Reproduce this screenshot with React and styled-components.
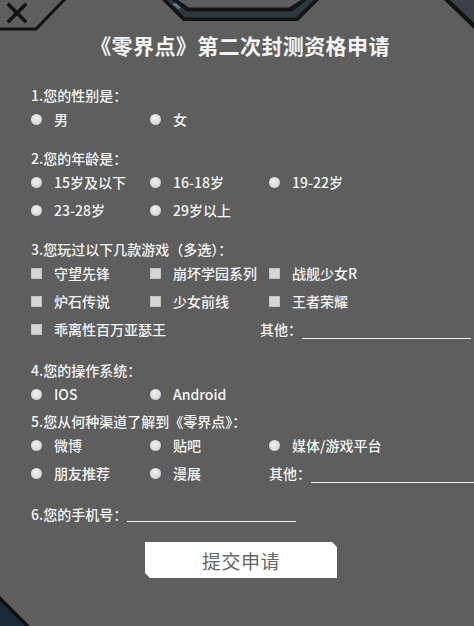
import React from "react";
import styled, { createGlobalStyle } from "styled-components";

const GlobalStyle = createGlobalStyle`
  html, body { margin: 0; padding: 0; background: #5e5e5e; }
  body { font-family: "Noto Sans CJK SC", "Noto Sans", sans-serif; }
  * { box-sizing: border-box; }
`;

const Page = styled.div`
  position: relative;
  width: 474px;
  height: 626px;
  overflow: hidden;
  background: #5e5e5e;
  color: #f4f4f4;
  padding-top: 30px;
`;

const Frame = styled.svg`
  position: absolute;
  left: 0;
  top: 0;
  pointer-events: none;
`;

const Title = styled.h1`
  margin: 0;
  font-size: 21px;
  line-height: 30px;
  font-weight: 700;
  text-align: center;
  letter-spacing: 0.4px;
  padding-left: 6px;
`;

const Form = styled.form`
  margin-top: 25px;
  padding-left: 31px;
  display: flex;
  flex-direction: column;
`;

const Group = styled.div`
  display: flex;
  flex-direction: column;
  margin-bottom: ${(p) => p.$gap}px;
`;

const Label = styled.div`
  font-size: 14px;
  line-height: 20px;
  font-weight: 500;
  white-space: nowrap;
  flex: 0 0 auto;
  width: ${(p) => (p.$width ? `${p.$width}px` : "auto")};
`;

const Row = styled.div`
  display: flex;
  align-items: center;
  height: ${(p) => p.$h || 28}px;
`;

const Option = styled.label`
  display: flex;
  align-items: center;
  gap: 12px;
  width: ${(p) => p.$width || 119}px;
  flex: 0 0 auto;
  font-size: 14px;
  font-weight: 500;
  white-space: nowrap;
`;

const Radio = styled.span`
  width: 11px;
  height: 11px;
  border-radius: 50%;
  background: radial-gradient(circle at 45% 40%, #f2f2f2 0%, #dcdcdc 55%, #b4b4b4 100%);
  flex: 0 0 auto;
`;

const Check = styled.span`
  width: 11px;
  height: 11px;
  background: #d6d6d6;
  border: 1px solid #c2c2c2;
  flex: 0 0 auto;
`;

const OtherText = styled.span`
  font-size: 14px;
  font-weight: 500;
  white-space: nowrap;
  width: ${(p) => p.$width}px;
  flex: 0 0 auto;
`;

const Blank = styled.span`
  display: block;
  width: ${(p) => p.$width}px;
  height: ${(p) => p.$h || 15}px;
  border-bottom: 1px solid #f4f4f4;
  flex: 0 0 auto;
  align-self: ${(p) => (p.$bottom ? "flex-end" : "center")};
  margin-bottom: ${(p) => (p.$bottom ? 4 : 0)}px;
`;

const Submit = styled.button`
  margin: 18px 0 0 114px;
  width: 192px;
  height: 36px;
  border: none;
  background: #ffffff;
  color: #666666;
  font-family: "Noto Sans CJK SC", sans-serif;
  font-size: 19px;
  letter-spacing: 0.5px;
  padding: 0;
  clip-path: polygon(0 0, calc(100% - 5px) 0, 100% 5px, 100% 100%, 5px 100%, 0 calc(100% - 5px));
`;

function Choice({ type = "radio", children, width }) {
  return (
    <Option $width={width}>
      {type === "radio" ? <Radio /> : <Check />}
      <span>{children}</span>
    </Option>
  );
}

function Decorations() {
  return (
    <Frame width="474" height="626" viewBox="0 0 474 626">
      {/* top-left corner */}
      <polyline points="0,29 36,29 65,-1" fill="none" stroke="#111" strokeWidth="3" />
      <path d="M9 5 L25 21 M25 5 L9 21" stroke="#111" strokeWidth="3.5" strokeLinecap="square" />
      {/* top center bracket */}
      <polygon points="162,0 183,21 298,21 319,0" fill="#121416" />
      <polygon points="167,0 185,17.5 296,17.5 314,0" fill="#2e383d" />
      <polygon points="172,0 187,11.5 292,11.5 307,0" fill="#121416" />
      <polygon points="178,0 189,7.5 289,7.5 301,0" fill="#5e5e5e" />
      <polygon points="172,4 178,9 181,8 176,3" fill="#6a767c" />
      {/* top-right corner */}
      <polygon points="444,0 474,0 474,29" fill="#111" />
      <polygon points="450,0 474,0 474,23" fill="#3c3f48" />
      {/* bottom-left corner */}
      <polygon points="0,596 30,626 0,626" fill="#0d1115" />
      <polygon points="0,601 25,626 0,626" fill="#1a2a36" />
    </Frame>
  );
}

export default function App() {
  return (
    <>
      <GlobalStyle />
      <Page>
        <Decorations />
        <Title>《零界点》第二次封测资格申请</Title>
        <Form onSubmit={(e) => e.preventDefault()}>
          <Group $gap={15}>
            <Label>1.您的性别是：</Label>
            <Row>
              <Choice>男</Choice>
              <Choice>女</Choice>
            </Row>
          </Group>
          <Group $gap={15}>
            <Label>2.您的年龄是：</Label>
            <Row>
              <Choice>15岁及以下</Choice>
              <Choice>16-18岁</Choice>
              <Choice>19-22岁</Choice>
            </Row>
            <Row>
              <Choice>23-28岁</Choice>
              <Choice>29岁以上</Choice>
            </Row>
          </Group>
          <Group $gap={17}>
            <Label>3.您玩过以下几款游戏（多选）：</Label>
            <Row>
              <Choice type="check">守望先锋</Choice>
              <Choice type="check">崩坏学园系列</Choice>
              <Choice type="check">战舰少女R</Choice>
            </Row>
            <Row>
              <Choice type="check">炉石传说</Choice>
              <Choice type="check">少女前线</Choice>
              <Choice type="check">王者荣耀</Choice>
            </Row>
            <Row>
              <Choice type="check" width={229}>乖离性百万亚瑟王</Choice>
              <OtherText $width={42}>其他：</OtherText>
              <Blank $width={169} $bottom />
            </Row>
          </Group>
          <Group $gap={3}>
            <Label>4.您的操作系统：</Label>
            <Row>
              <Choice>IOS</Choice>
              <Choice>Android</Choice>
            </Row>
          </Group>
          <Group $gap={17}>
            <Label>5.您从何种渠道了解到《零界点》：</Label>
            <Row>
              <Choice>微博</Choice>
              <Choice>贴吧</Choice>
              <Choice>媒体/游戏平台</Choice>
            </Row>
            <Row>
              <Choice>朋友推荐</Choice>
              <Choice>漫展</Choice>
              <OtherText $width={42}>其他：</OtherText>
              <Blank $width={170} $bottom />
            </Row>
          </Group>
          <Row $h={20}>
            <Label $width={96}>6.您的手机号：</Label>
            <Blank $width={169} />
          </Row>
          <Submit type="submit">提交申请</Submit>
        </Form>
      </Page>
    </>
  );
}
